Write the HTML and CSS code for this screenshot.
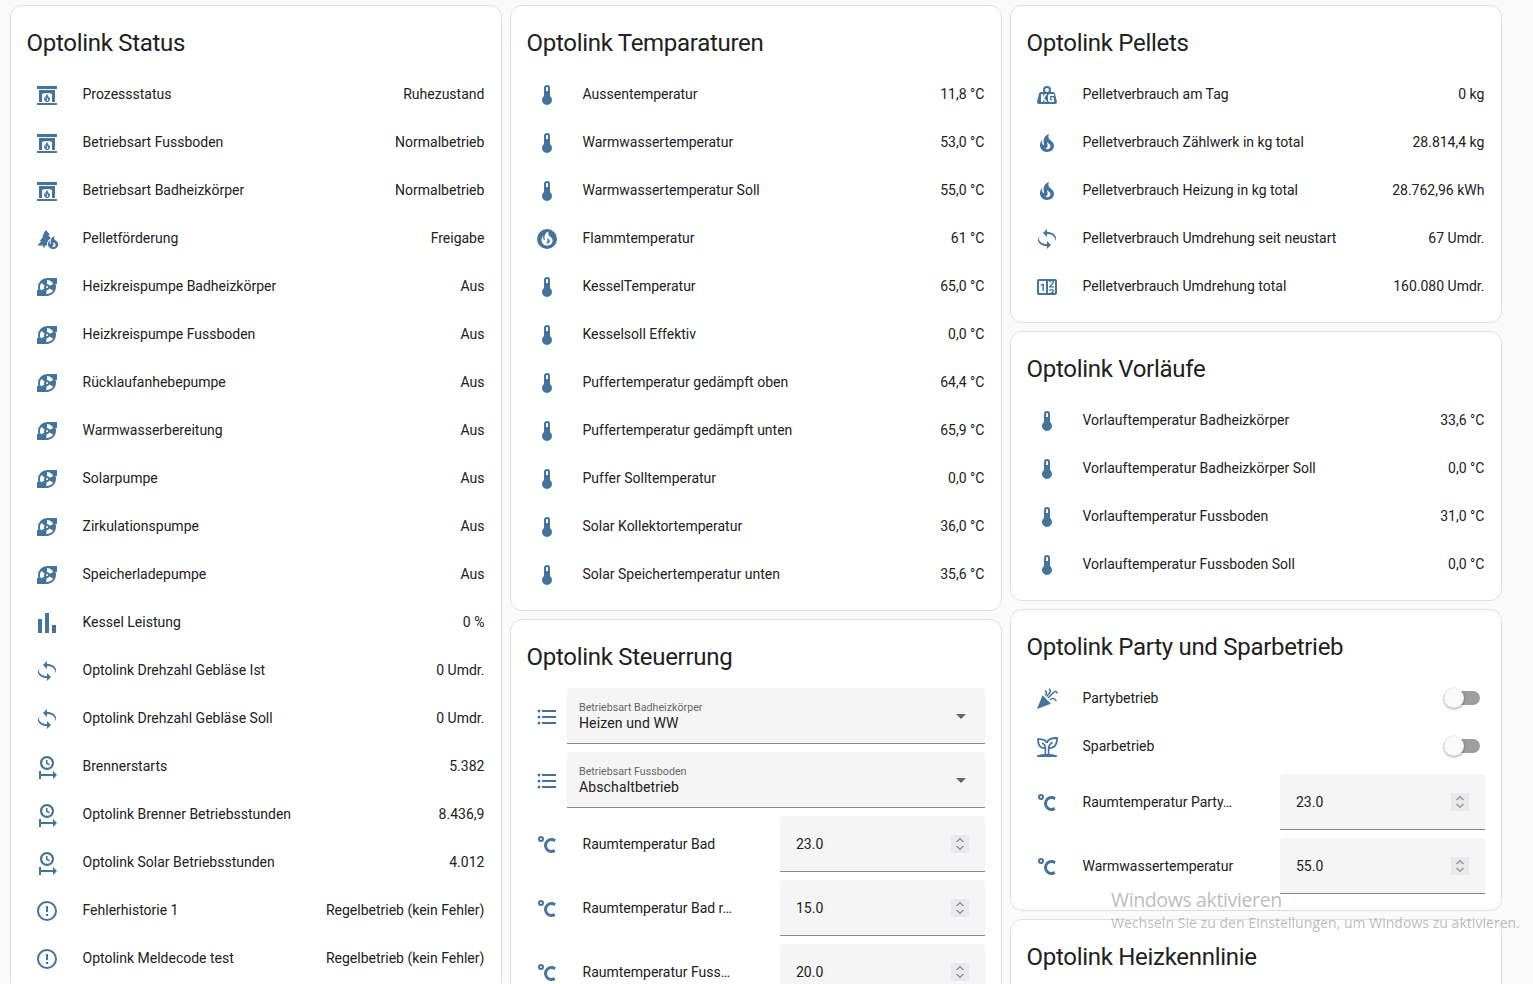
FILE: index.html
```html
<!DOCTYPE html>
<html lang="de">
<head>
<meta charset="utf-8">
<title>Optolink</title>
<link rel="stylesheet" href="styles.css">
</head>
<body>
<svg class="sprite" aria-hidden="true">
  <symbol id="fireplace" viewBox="0 0 24 24"><path d="M22,22H2V20H22V22M22,6H2V3H22V6M20,7V19H17V11C17,11 14.5,10 12,10C9.5,10 7,11 7,11V19H4V7H20M14.5,14.67C14.5,14.67 14.8,15.1 14.87,15.34C15.29,16.35 15,17.5 14.21,18.24C13.5,18.9 12.5,19.07 11.6,18.95C10.75,18.84 9.97,18.3 9.5,17.57C9.36,17.34 9.24,17.09 9.17,16.83C9.08,16.61 9.04,16.38 9,16.15C8.94,15.2 9.32,14.18 10.03,13.58C9.71,14.29 9.79,15.17 10.27,15.78C10.35,15.9 10.5,15.95 10.61,15.91C10.7,15.87 10.78,15.78 10.78,15.68L10.74,15.55C10.21,14.13 10.65,12.5 11.79,11.57C12.1,11.32 12.5,11.09 12.87,11C12.46,11.8 12.59,12.86 13.24,13.5C13.5,13.79 13.84,14 14.14,14.23L14.5,14.67M12.9,17.4C13.3,17 13.4,16.4 13.2,15.9C13,15.4 12.4,15.2 12.2,14.5C12,15.4 12.5,15.9 12.2,16.6C12.1,17 11.7,17.3 11.2,17.4C11.7,17.9 12.5,17.8 12.9,17.4Z"/></symbol>
  <symbol id="treefire" viewBox="0 0 24 24"><path d="M11 3L15 8H13.2L16 11.2C13.5 12.6 12 15 12 18.6H9.8V20.6H8.2V18.6H2.2L6.4 14H4.6L8.4 9.6H6.8L9.2 6.4H8.4Z"/><ellipse cx="18" cy="17.6" rx="6" ry="6" fill="#fff"/><path d="M15.5 12L19 7L21 13Z" fill="#fff"/><use href="#fire" x="9.4" y="6.8" width="17.4" height="17.4"/></symbol>
  <symbol id="pump" viewBox="0 0 24 24"><path d="M2 21V15H3.5C3.18 14.06 3 13.05 3 12A9 9 0 0 1 12 3H22V9H20.5C20.82 9.94 21 10.95 21 12A9 9 0 0 1 12 21H2M5 12C5 13.28 5.34 14.47 5.94 15.5L9.4 13.5C9.15 13.06 9 12.55 9 12C9 11.35 9.21 10.75 9.56 10.26L6.3 7.93C5.5 9.08 5 10.5 5 12M12 19C14.59 19 16.85 17.59 18.06 15.5L14.6 13.5C14.08 14.4 13.11 15 12 15L11.71 15L11.33 18.97L12 19M12 9C13.21 9 14.26 9.72 14.73 10.76L18.37 9.1C17.27 6.68 14.83 5 12 5V9M12 11A1 1 0 0 0 11 12A1 1 0 0 0 12 13A1 1 0 0 0 13 12A1 1 0 0 0 12 11Z"/></symbol>
  <symbol id="poll" viewBox="0 0 24 24"><path d="M3,22V8H7V22H3M10,22V2H14V22H10M17,22V14H21V22H17Z"/></symbol>
  <symbol id="rotate" viewBox="0 0 24 24"><path d="M12,5C16.97,5 21,7.69 21,11C21,12.68 19.96,14.2 18.29,15.29C19.36,14.42 20,13.32 20,12.13C20,9.29 16.42,7 12,7V10L8,6L12,2V5M12,19C7.03,19 3,16.31 3,13C3,11.32 4.04,9.8 5.71,8.71C4.64,9.58 4,10.68 4,11.88C4,14.71 7.58,17 12,17V14L16,18L12,22V19Z"/></symbol>
  <symbol id="clock" viewBox="0 0 24 24"><path d="M12 1C8.14 1 5 4.14 5 8A7 7 0 0 0 12 15C15.86 15 19 11.87 19 8C19 4.14 15.86 1 12 1M12 3.15C14.67 3.15 16.85 5.32 16.85 8C16.85 10.68 14.67 12.85 12 12.85A4.85 4.85 0 0 1 7.15 8A4.85 4.85 0 0 1 12 3.15M11 5V8.69L14.19 10.53L14.94 9.23L12.5 7.82V5M4 16V24H6V21H18V24L22 20L18 16V19H6V16"/></symbol>
  <symbol id="alert" viewBox="0 0 24 24"><path d="M11,15H13V17H11V15M11,7H13V13H11V7M12,2C6.47,2 2,6.5 2,12A10,10 0 0,0 12,22A10,10 0 0,0 22,12A10,10 0 0,0 12,2M12,20A8,8 0 0,1 4,12A8,8 0 0,1 12,4A8,8 0 0,1 20,12A8,8 0 0,1 12,20Z"/></symbol>
  <symbol id="thermo" viewBox="0 0 24 24"><path d="M15 13V5A3 3 0 0 0 9 5V13A5 5 0 1 0 15 13M12 4A1 1 0 0 1 13 5V8H11V5A1 1 0 0 1 12 4Z"/></symbol>
  <symbol id="fire" viewBox="0 0 24 24"><path d="M17.66 11.2C17.43 10.9 17.15 10.64 16.89 10.38C16.22 9.78 15.46 9.35 14.82 8.72C13.33 7.26 13 4.85 13.95 3C13 3.23 12.17 3.75 11.46 4.32C8.87 6.4 7.85 10.07 9.07 13.22C9.11 13.32 9.15 13.42 9.15 13.55C9.15 13.77 9 13.97 8.8 14.05C8.57 14.15 8.33 14.09 8.14 13.93C8.08 13.88 8.04 13.83 8 13.76C6.87 12.33 6.69 10.28 7.45 8.64C5.78 10 4.87 12.3 5 14.47C5.06 14.97 5.12 15.47 5.29 15.97C5.43 16.57 5.7 17.17 6 17.7C7.08 19.43 8.95 20.67 10.96 20.92C13.1 21.19 15.39 20.8 17.03 19.32C18.86 17.66 19.5 15 18.56 12.72L18.43 12.46C18.22 12 17.66 11.2 17.66 11.2M14.5 17.5C14.22 17.74 13.76 18 13.4 18.1C12.28 18.5 11.16 17.94 10.5 17.28C11.69 17 12.4 16.12 12.61 15.23C12.78 14.43 12.46 13.77 12.33 13C12.21 12.26 12.23 11.63 12.5 10.94C12.69 11.32 12.89 11.7 13.13 12C13.9 13 15.11 13.44 15.37 14.8C15.41 14.94 15.43 15.08 15.43 15.23C15.46 16.05 15.1 16.95 14.5 17.5H14.5Z"/></symbol>
  <symbol id="firecircle" viewBox="0 0 24 24"><circle cx="12" cy="12" r="10"/><use href="#fire" x="2.6" y="2" width="19" height="19" fill="#fff"/></symbol>
  <symbol id="weight" viewBox="0 0 24 24"><path fill-rule="evenodd" d="M12,3A4,4 0 0,1 16,7C16,7.73 15.81,8.41 15.46,9H18C18.95,9 19.75,9.67 19.95,10.56C21.96,18.57 22,18.78 22,19A2,2 0 0,1 20,21H4A2,2 0 0,1 2,19C2,18.78 2.04,18.57 4.05,10.56C4.25,9.67 5.05,9 6,9H8.54C8.19,8.41 8,7.73 8,7A4,4 0 0,1 12,3M12,5A2,2 0 0,0 10,7A2,2 0 0,0 12,9A2,2 0 0,0 14,7A2,2 0 0,0 12,5M6,11V19H8V16.4L9.8,19H12.1L9.3,15L12,11H9.8L8,13.7V11H6M15,11C13.8,11 13,11.8 13,13V17C13,18.2 13.8,19 15,19H19V14.5H16V16H17.2V17.2H15V12.9H19V11H15Z"/></symbol>
  <symbol id="counter" viewBox="0 0 24 24"><path d="M4,4H20A2,2 0 0,1 22,6V18A2,2 0 0,1 20,20H4A2,2 0 0,1 2,18V6A2,2 0 0,1 4,4M4,6V18H11V6H4M20,18V6H18.76C19,6.54 18.95,7.07 18.95,7.13C18.88,7.8 18.41,8.5 18.24,8.75L15.91,11.3L19.23,11.28L19.24,12.5L14.04,12.47L14,11.47C14,11.47 17.05,8.24 17.2,7.95C17.34,7.67 17.91,6 16.5,6C15.27,6.05 15.41,7.3 15.41,7.3L13.87,7.31C13.87,7.31 13.88,6.65 14.25,6H13V18H15.58L15.57,17.14L16.54,17.13C16.54,17.13 17.45,16.97 17.46,16.08C17.5,15.08 16.65,15.08 16.5,15.08C16.37,15.08 15.43,15.13 15.43,15.95H13.91C13.91,15.95 13.95,13.89 16.5,13.89C19.1,13.89 18.96,15.91 18.96,15.91C18.96,15.91 19,17.16 17.85,17.63L18.37,18H20M8.92,16H7.42V10.2L5.62,10.76V9.53L8.76,8.41H8.92V16Z"/></symbol>
  <symbol id="list" viewBox="0 0 24 24"><path d="M7,5H21V7H7V5M7,13V11H21V13H7M7,19V17H21V19H7Z"/><circle cx="4" cy="6" r="1.5"/><circle cx="4" cy="12" r="1.5"/><circle cx="4" cy="18" r="1.5"/></symbol>
  <symbol id="celsius" viewBox="0 0 24 24"><path d="M16.5,5C18.05,5 19.5,5.47 20.69,6.28L19.53,9.17C18.73,8.44 17.67,8 16.5,8C14,8 12,10 12,12.5C12,15 14,17 16.5,17C17.53,17 18.47,16.66 19.23,16.08L20.37,18.93C19.24,19.61 17.92,20 16.5,20A7.5,7.5 0 0,1 9,12.5A7.5,7.5 0 0,1 16.5,5M6,3A3,3 0 0,1 9,6A3,3 0 0,1 6,9A3,3 0 0,1 3,6A3,3 0 0,1 6,3M6,5A1,1 0 0,0 5,6A1,1 0 0,0 6,7A1,1 0 0,0 7,6A1,1 0 0,0 6,5Z"/></symbol>
  <symbol id="party" viewBox="0 0 24 24"><path d="M7.5 8.2L16 16.8L2 22Z"/><g fill="none" stroke="currentColor" stroke-width="1.5"><path d="M10 3.6L10.8 4.4C11.8 5.4 11.8 6.5 10.8 7.5L10 8.3"/><path d="M14 1.9L14.8 2.7C15.7 3.6 15.7 4.8 14.8 5.7L11.5 9.4"/><path d="M13 11L18.8 5.2C19.7 4.3 20.8 4.3 21.7 5.2L22.7 6.2"/><path d="M15.2 13L16 12.2C17 11.2 18.6 11.2 19.6 12.2L21.4 14"/></g></symbol>
  <symbol id="sprout" viewBox="0 0 24 24"><path d="M2 22V20.4C5 19.4 8.5 19 12 19S19 19.4 22 20.4V22Z"/><g fill="none" stroke="currentColor" stroke-width="1.8"><path d="M11.8 8C10.6 4.8 7.5 3.9 3 4.2C3 10 5 13.6 10.3 13"/><path d="M11.8 8C12.8 4.2 16.5 2.8 22.1 3C22.1 9.5 19.6 13.6 13.8 13"/></g><g fill="none" stroke="currentColor" stroke-width="1.6"><path d="M7 8C9.4 9 10.4 10.8 10.4 13.4V20"/><path d="M17.5 7.2C14.8 8.8 13.6 10.8 13.6 13.6V20"/></g></symbol>
</svg>

<main class="board">
  <div class="column">
    <section class="card">
      <h1 class="title">Optolink Status</h1>
      <div class="rows">
        <div class="row"><svg class="icon"><use href="#fireplace"/></svg><span class="name">Prozessstatus</span><span class="value">Ruhezustand</span></div>
        <div class="row"><svg class="icon"><use href="#fireplace"/></svg><span class="name">Betriebsart Fussboden</span><span class="value">Normalbetrieb</span></div>
        <div class="row"><svg class="icon"><use href="#fireplace"/></svg><span class="name">Betriebsart Badheizkörper</span><span class="value">Normalbetrieb</span></div>
        <div class="row"><svg class="icon"><use href="#treefire"/></svg><span class="name">Pelletförderung</span><span class="value">Freigabe</span></div>
        <div class="row"><svg class="icon"><use href="#pump"/></svg><span class="name">Heizkreispumpe Badheizkörper</span><span class="value">Aus</span></div>
        <div class="row"><svg class="icon"><use href="#pump"/></svg><span class="name">Heizkreispumpe Fussboden</span><span class="value">Aus</span></div>
        <div class="row"><svg class="icon"><use href="#pump"/></svg><span class="name">Rücklaufanhebepumpe</span><span class="value">Aus</span></div>
        <div class="row"><svg class="icon"><use href="#pump"/></svg><span class="name">Warmwasserbereitung</span><span class="value">Aus</span></div>
        <div class="row"><svg class="icon"><use href="#pump"/></svg><span class="name">Solarpumpe</span><span class="value">Aus</span></div>
        <div class="row"><svg class="icon"><use href="#pump"/></svg><span class="name">Zirkulationspumpe</span><span class="value">Aus</span></div>
        <div class="row"><svg class="icon"><use href="#pump"/></svg><span class="name">Speicherladepumpe</span><span class="value">Aus</span></div>
        <div class="row"><svg class="icon"><use href="#poll"/></svg><span class="name">Kessel Leistung</span><span class="value">0 %</span></div>
        <div class="row"><svg class="icon"><use href="#rotate"/></svg><span class="name">Optolink Drehzahl Gebläse Ist</span><span class="value">0 Umdr.</span></div>
        <div class="row"><svg class="icon"><use href="#rotate"/></svg><span class="name">Optolink Drehzahl Gebläse Soll</span><span class="value">0 Umdr.</span></div>
        <div class="row"><svg class="icon"><use href="#clock"/></svg><span class="name">Brennerstarts</span><span class="value">5.382</span></div>
        <div class="row"><svg class="icon"><use href="#clock"/></svg><span class="name">Optolink Brenner Betriebsstunden</span><span class="value">8.436,9</span></div>
        <div class="row"><svg class="icon"><use href="#clock"/></svg><span class="name">Optolink Solar Betriebsstunden</span><span class="value">4.012</span></div>
        <div class="row"><svg class="icon"><use href="#alert"/></svg><span class="name">Fehlerhistorie 1</span><span class="value">Regelbetrieb (kein Fehler)</span></div>
        <div class="row"><svg class="icon"><use href="#alert"/></svg><span class="name">Optolink Meldecode test</span><span class="value">Regelbetrieb (kein Fehler)</span></div>
      </div>
    </section>
  </div>

  <div class="column">
    <section class="card">
      <h1 class="title">Optolink Temparaturen</h1>
      <div class="rows">
        <div class="row"><svg class="icon"><use href="#thermo"/></svg><span class="name">Aussentemperatur</span><span class="value">11,8 °C</span></div>
        <div class="row"><svg class="icon"><use href="#thermo"/></svg><span class="name">Warmwassertemperatur</span><span class="value">53,0 °C</span></div>
        <div class="row"><svg class="icon"><use href="#thermo"/></svg><span class="name">Warmwassertemperatur Soll</span><span class="value">55,0 °C</span></div>
        <div class="row"><svg class="icon"><use href="#firecircle"/></svg><span class="name">Flammtemperatur</span><span class="value">61 °C</span></div>
        <div class="row"><svg class="icon"><use href="#thermo"/></svg><span class="name">KesselTemperatur</span><span class="value">65,0 °C</span></div>
        <div class="row"><svg class="icon"><use href="#thermo"/></svg><span class="name">Kesselsoll Effektiv</span><span class="value">0,0 °C</span></div>
        <div class="row"><svg class="icon"><use href="#thermo"/></svg><span class="name">Puffertemperatur gedämpft oben</span><span class="value">64,4 °C</span></div>
        <div class="row"><svg class="icon"><use href="#thermo"/></svg><span class="name">Puffertemperatur gedämpft unten</span><span class="value">65,9 °C</span></div>
        <div class="row"><svg class="icon"><use href="#thermo"/></svg><span class="name">Puffer Solltemperatur</span><span class="value">0,0 °C</span></div>
        <div class="row"><svg class="icon"><use href="#thermo"/></svg><span class="name">Solar Kollektortemperatur</span><span class="value">36,0 °C</span></div>
        <div class="row"><svg class="icon"><use href="#thermo"/></svg><span class="name">Solar Speichertemperatur unten</span><span class="value">35,6 °C</span></div>
      </div>
    </section>
    <section class="card">
      <h1 class="title">Optolink Steuerrung</h1>
      <div class="rows">
        <div class="row tall"><svg class="icon"><use href="#list"/></svg><div class="select"><div class="picked"><span class="label">Betriebsart Badheizkörper</span><span class="choice">Heizen und WW</span></div><i class="caret"></i></div></div>
        <div class="row tall"><svg class="icon"><use href="#list"/></svg><div class="select"><div class="picked"><span class="label">Betriebsart Fussboden</span><span class="choice">Abschaltbetrieb</span></div><i class="caret"></i></div></div>
        <div class="row tall"><svg class="icon"><use href="#celsius"/></svg><span class="name">Raumtemperatur Bad</span><div class="number">23.0<svg class="spin" viewBox="0 0 18 18"><path d="M5.5 7L9 3.8L12.5 7M5.5 11L9 14.2L12.5 11"/></svg></div></div>
        <div class="row tall"><svg class="icon"><use href="#celsius"/></svg><span class="name">Raumtemperatur Bad r…</span><div class="number">15.0<svg class="spin" viewBox="0 0 18 18"><path d="M5.5 7L9 3.8L12.5 7M5.5 11L9 14.2L12.5 11"/></svg></div></div>
        <div class="row tall"><svg class="icon"><use href="#celsius"/></svg><span class="name">Raumtemperatur Fuss…</span><div class="number">20.0<svg class="spin" viewBox="0 0 18 18"><path d="M5.5 7L9 3.8L12.5 7M5.5 11L9 14.2L12.5 11"/></svg></div></div>
      </div>
    </section>
  </div>

  <div class="column">
    <section class="card">
      <h1 class="title">Optolink Pellets</h1>
      <div class="rows">
        <div class="row"><svg class="icon"><use href="#weight"/></svg><span class="name">Pelletverbrauch am Tag</span><span class="value">0 kg</span></div>
        <div class="row"><svg class="icon"><use href="#fire"/></svg><span class="name">Pelletverbrauch Zählwerk in kg total</span><span class="value">28.814,4 kg</span></div>
        <div class="row"><svg class="icon"><use href="#fire"/></svg><span class="name">Pelletverbrauch Heizung in kg total</span><span class="value">28.762,96 kWh</span></div>
        <div class="row"><svg class="icon"><use href="#rotate"/></svg><span class="name">Pelletverbrauch Umdrehung seit neustart</span><span class="value">67 Umdr.</span></div>
        <div class="row"><svg class="icon"><use href="#counter"/></svg><span class="name">Pelletverbrauch Umdrehung total</span><span class="value">160.080 Umdr.</span></div>
      </div>
    </section>
    <section class="card">
      <h1 class="title">Optolink Vorläufe</h1>
      <div class="rows">
        <div class="row"><svg class="icon"><use href="#thermo"/></svg><span class="name">Vorlauftemperatur Badheizkörper</span><span class="value">33,6 °C</span></div>
        <div class="row"><svg class="icon"><use href="#thermo"/></svg><span class="name">Vorlauftemperatur Badheizkörper Soll</span><span class="value">0,0 °C</span></div>
        <div class="row"><svg class="icon"><use href="#thermo"/></svg><span class="name">Vorlauftemperatur Fussboden</span><span class="value">31,0 °C</span></div>
        <div class="row"><svg class="icon"><use href="#thermo"/></svg><span class="name">Vorlauftemperatur Fussboden Soll</span><span class="value">0,0 °C</span></div>
      </div>
    </section>
    <section class="card">
      <h1 class="title">Optolink Party und Sparbetrieb</h1>
      <div class="rows">
        <div class="row"><svg class="icon"><use href="#party"/></svg><span class="name">Partybetrieb</span><span class="toggle"></span></div>
        <div class="row"><svg class="icon"><use href="#sprout"/></svg><span class="name">Sparbetrieb</span><span class="toggle"></span></div>
        <div class="row tall"><svg class="icon"><use href="#celsius"/></svg><span class="name">Raumtemperatur Party…</span><div class="number">23.0<svg class="spin" viewBox="0 0 18 18"><path d="M5.5 7L9 3.8L12.5 7M5.5 11L9 14.2L12.5 11"/></svg></div></div>
        <div class="row tall"><svg class="icon"><use href="#celsius"/></svg><span class="name">Warmwassertemperatur</span><div class="number">55.0<svg class="spin" viewBox="0 0 18 18"><path d="M5.5 7L9 3.8L12.5 7M5.5 11L9 14.2L12.5 11"/></svg></div></div>
      </div>
    </section>
    <section class="card">
      <h1 class="title">Optolink Heizkennlinie</h1>
      <div class="rows"></div>
    </section>
  </div>
</main>

<div class="watermark">
  <div class="wm-title">Windows aktivieren</div>
  <div class="wm-text">Wechseln Sie zu den Einstellungen, um Windows zu aktivieren.</div>
</div>
</body>
</html>
```
FILE: styles.css
```css
* { box-sizing: border-box; }

body {
  margin: 0;
  height: 984px;
  overflow: hidden;
  background: #fafafa;
  color: #212121;
  font: 14px/20px Roboto, sans-serif;
}

.sprite { display: none; }

.board {
  display: flex;
  align-items: flex-start;
  gap: 8px;
  padding: 5px 0 0 10px;
}

.column {
  display: flex;
  flex-direction: column;
  gap: 8px;
  width: 492px;
}

.card {
  background: #fff;
  border: 1px solid #e0e0e0;
  border-radius: 12px;
  padding: 0 16px 15px;
}

.title {
  margin: 0 0 0 -0.5px;
  height: 68px;
  padding-top: 13px;
  font-size: 24px;
  font-weight: 400;
  line-height: 48px;
  letter-spacing: -0.012em;
}

.rows {
  display: flex;
  flex-direction: column;
  gap: 8px;
  padding-bottom: 1px;
}

.row {
  display: flex;
  align-items: center;
  height: 40px;
}

.row.tall { height: 56px; }

.icon {
  flex: none;
  width: 24px;
  height: 24px;
  margin: 2px 8px 0;
  color: #44739e;
  fill: currentColor;
}

.name {
  flex: 1;
  padding-left: 15.5px;
  white-space: nowrap;
}

.value {
  padding-right: 0.6px;
  white-space: nowrap;
}

.select,
.number {
  display: flex;
  align-items: center;
  height: 56px;
  background: #f5f5f5;
  border-bottom: 1px solid #8a8a8a;
  border-radius: 4px 4px 0 0;
}

.select {
  flex: 1;
  justify-content: space-between;
  padding: 0 19px 0 12px;
}

.picked {
  display: flex;
  flex-direction: column;
  padding-top: 1px;
}

.label {
  font-size: 10.7px;
  line-height: 14px;
  color: #666;
}

.choice {
  font-size: 14px;
  line-height: 17px;
  letter-spacing: 0.13px;
}

.caret {
  margin-top: 2px;
  border: 5px solid transparent;
  border-top-color: #666;
  border-bottom: 0;
}

.number {
  width: 205px;
  justify-content: space-between;
  padding: 0 16px;
}

.spin {
  width: 18px;
  height: 18px;
  background: #e9e9ed;
  fill: none;
  stroke: #9494a0;
  stroke-width: 1.5;
}

.toggle {
  position: relative;
  width: 36px;
  height: 14px;
  margin-right: 5px;
  border-radius: 7px;
  background: #9e9e9e;
}

.toggle::before {
  content: "";
  position: absolute;
  left: 0;
  top: -3px;
  width: 20px;
  height: 20px;
  border-radius: 50%;
  background: #fafafa;
  box-shadow: 0 1px 3px rgba(0, 0, 0, 0.4);
}

/* Activation notice floats above the cards */
.watermark {
  position: absolute;
  left: 1111px;
  top: 887px;
  color: rgba(120, 120, 120, 0.5);
  font-family: "Open Sans", "Noto Sans", sans-serif;
  white-space: nowrap;
}

.wm-title {
  font-size: 19.5px;
  line-height: 26px;
  letter-spacing: -0.37px;
}

.wm-text {
  font-size: 14px;
  line-height: 20px;
  letter-spacing: 0.04px;
}
```
